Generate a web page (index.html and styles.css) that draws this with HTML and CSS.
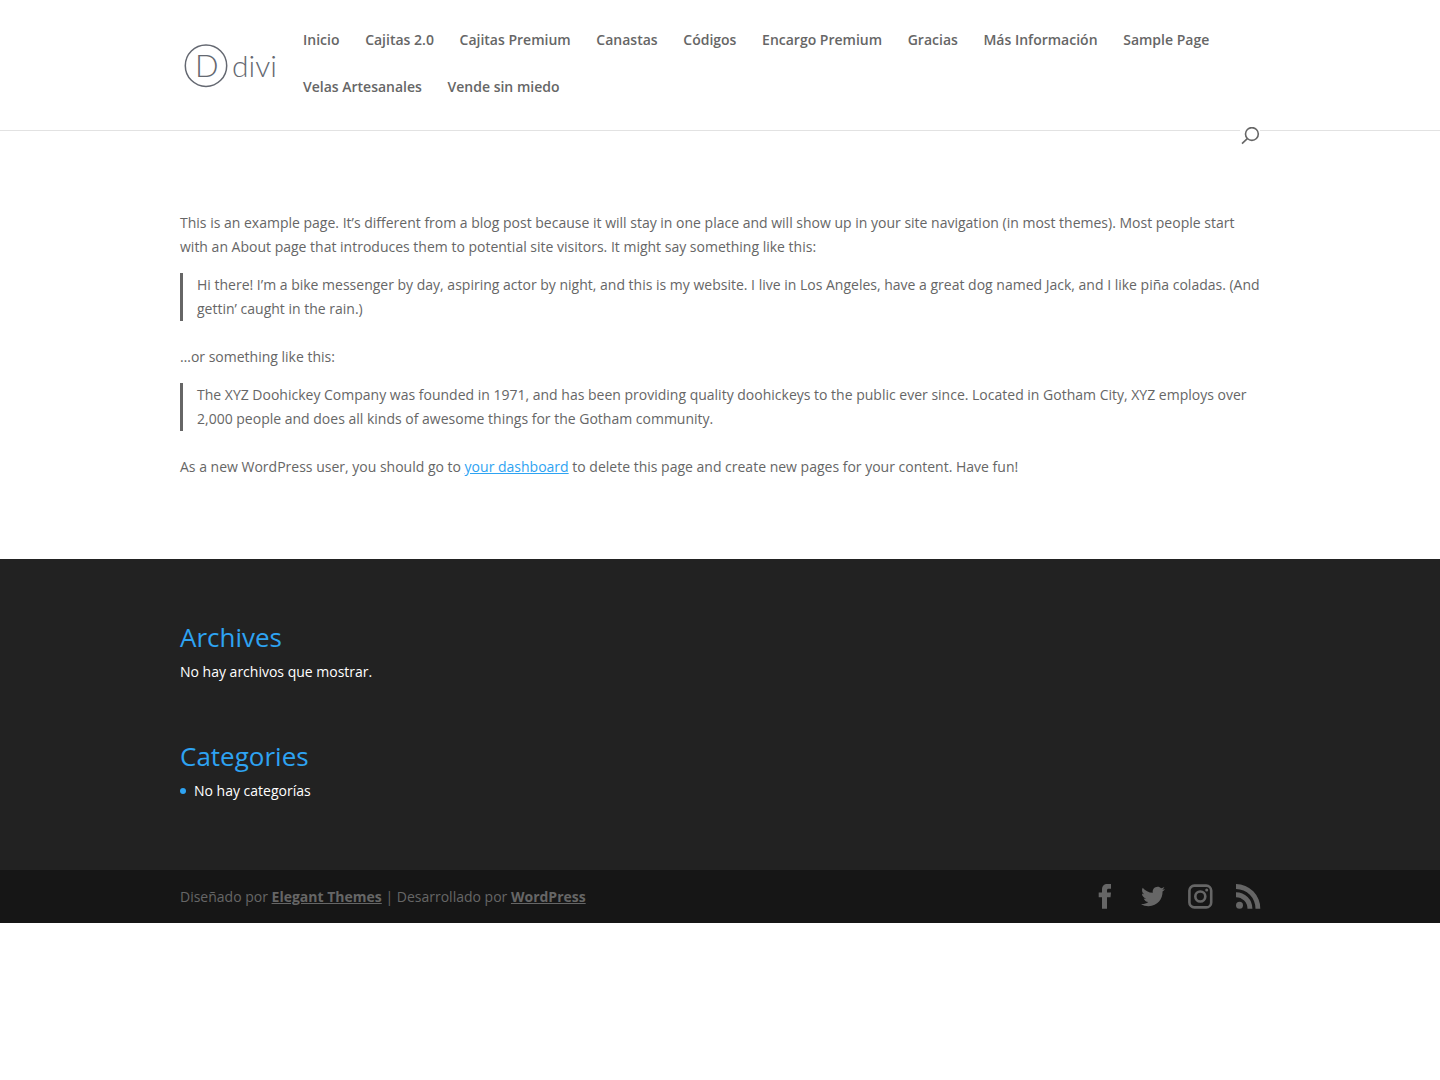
FILE: index.html
```html
<!DOCTYPE html>
<html lang="es">
<head>
    <meta charset="UTF-8">
    <meta name="viewport" content="width=device-width, initial-scale=1">
    <title>Sample Page</title>
    <link rel="stylesheet" href="styles.css">
</head>
<body>

<header class="main-header">
    <div class="container header-inner">
        <a class="logo" href="#" aria-label="divi">
            <svg width="100" height="48" viewBox="0 0 100 48">
                <circle cx="26" cy="24.700" r="20.700"/>
                <text class="logo-d" x="15" y="36">D</text>
                <text class="logo-name" x="52" y="36">divi</text>
            </svg>
        </a>
        <nav class="top-menu">
            <ul>
                <li><a href="#">Inicio</a></li>
                <li><a href="#">Cajitas 2.0</a></li>
                <li><a href="#">Cajitas Premium</a></li>
                <li><a href="#">Canastas</a></li>
                <li><a href="#">Códigos</a></li>
                <li><a href="#">Encargo Premium</a></li>
                <li><a href="#">Gracias</a></li>
                <li><a href="#">Más Información</a></li>
                <li><a href="#">Sample Page</a></li>
                <li><a href="#">Velas Artesanales</a></li>
                <li><a href="#">Vende sin miedo</a></li>
            </ul>
        </nav>
        <button class="search-button" type="button" aria-label="Buscar">
            <svg width="20" height="18" viewBox="0 0 20 18">
                <circle cx="11.900" cy="7" r="6.400"/>
                <path d="M7.300 11.600L2 16.600"/>
            </svg>
        </button>
    </div>
</header>

<main class="container content">
    <p>This is an example page. It’s different from a blog post because it will stay in one place and will show up in your site navigation (in most themes). Most people start with an About page that introduces them to potential site visitors. It might say something like this:</p>
    <blockquote>Hi there! I’m a bike messenger by day, aspiring actor by night, and this is my website. I live in Los Angeles, have a great dog named Jack, and I like piña coladas. (And gettin’ caught in the rain.)</blockquote>
    <p>…or something like this:</p>
    <blockquote>The XYZ Doohickey Company was founded in 1971, and has been providing quality doohickeys to the public ever since. Located in Gotham City, XYZ employs over 2,000 people and does all kinds of awesome things for the Gotham community.</blockquote>
    <p>As a new WordPress user, you should go to <a href="#">your dashboard</a> to delete this page and create new pages for your content. Have fun!</p>
</main>

<footer class="main-footer">
    <div class="container footer-widgets">
        <section class="widget">
            <h4>Archives</h4>
            <p>No hay archivos que mostrar.</p>
        </section>
        <section class="widget">
            <h4>Categories</h4>
            <ul>
                <li>No hay categorías</li>
            </ul>
        </section>
    </div>
    <div class="footer-bottom">
        <div class="container footer-bottom-inner">
            <p class="footer-info">Diseñado por <a href="#">Elegant Themes</a> | Desarrollado por <a href="#">WordPress</a></p>
            <ul class="social-icons">
                <li><a href="#" aria-label="Facebook">
                    <svg width="24" height="25" viewBox="0 0 24 25"><path d="M10 24.700V13.200H6.700V8.400H10V5.700C10 2 12 0 15.500 0H19v4.700h-2.300c-1.300 0-1.700.5-1.700 1.600v2.100h4l-.500 4.800H15v11.500z"/></svg>
                </a></li>
                <li><a href="#" aria-label="Twitter">
                    <svg width="24" height="25" viewBox="-1 0 24 24"><path d="M24 4.557c-.883.392-1.832.656-2.828.775 1.017-.609 1.798-1.574 2.165-2.724-.951.564-2.005.974-3.127 1.195-.897-.957-2.178-1.555-3.594-1.555-3.179 0-5.515 2.966-4.797 6.045-4.091-.205-7.719-2.165-10.148-5.144-1.290 2.213-.669 5.108 1.523 6.574-.806-.026-1.566-.247-2.229-.616-.054 2.281 1.581 4.415 3.949 4.890-.693.188-1.452.232-2.224.084.626 1.956 2.444 3.379 4.600 3.419-2.070 1.623-4.678 2.348-7.290 2.040 2.179 1.397 4.768 2.212 7.548 2.212 9.142 0 14.307-7.721 13.995-14.646.962-.695 1.797-1.562 2.457-2.549z"/></svg>
                </a></li>
                <li><a href="#" aria-label="Instagram">
                    <svg width="24" height="25" viewBox="0 0 24 25">
                        <rect class="line" x="1.400" y="1.600" width="21.800" height="21.800" rx="5"/>
                        <circle class="line" cx="12.300" cy="12.500" r="5"/>
                        <circle cx="18.700" cy="6.100" r="1.500"/>
                    </svg>
                </a></li>
                <li><a href="#" aria-label="RSS">
                    <svg width="24" height="25" viewBox="0 0 24 25">
                        <circle cx="3.500" cy="21.200" r="3.500"/>
                        <path d="M0 8.300v4.900A11.500 11.500 0 0 1 11.500 24.700h4.900A16.400 16.400 0 0 0 0 8.300z"/>
                        <path d="M0 0v4.900A19.600 19.600 0 0 1 19.500 24.700H24.300A24.500 24.500 0 0 0 0 0z"/>
                    </svg>
                </a></li>
            </ul>
        </div>
    </div>
</footer>

</body>
</html>
```

FILE: styles.css
```css
*{
    box-sizing: border-box;
}
body{
    margin: 0;
    background: #fff;
    color: #666;
    font-family: "Open Sans", Arial, sans-serif;
    font-size: 14px;
    font-weight: 400;
    line-height: 24px;
}
p,h4,ul,blockquote{
    margin: 0;
    padding: 0;
}
ul{
    list-style: none;
}
a{
    color: #2ea3f2;
}
.container{
    width: 80%;
    max-width: 1080px;
    margin: 0 auto;
}

/* header */
.main-header{
    border-bottom: 1px solid #e2e2e2;
}
.header-inner{
    position: relative;
    display: flex;
    align-items: center;
}
.logo{
    flex: none;
    width: 123px;
    line-height: 0;
}
.logo circle{
    fill: none;
    stroke: #646871;
    stroke-width: 1.5;
}
.logo text{
    fill: #646871;
    font-family: Lato, sans-serif;
    font-weight: 300;
}
.logo .logo-d{
    font-size: 31px;
}
.logo .logo-name{
    font-size: 30px;
}
.top-menu{
    padding: 16px 0 20px;
}
.top-menu li{
    display: inline-block;
    padding-right: 22px;
    line-height: 47px;
}
.top-menu a{
    color: #666;
    font-weight: 600;
    text-decoration: none;
}
.search-button{
    position: absolute;
    right: 0;
    bottom: -15px;
    padding: 0;
    border: 0;
    background: #fff;
    line-height: 0;
    cursor: pointer;
}
.search-button svg{
    fill: none;
    stroke: #666;
    stroke-width: 1.6;
}

/* page content */
.content{
    padding: 80px 0;
}
.content p{
    padding-bottom: 14px;
}
.content p:last-child{
    padding-bottom: 0;
}
.content blockquote{
    margin-bottom: 24px;
    padding-left: 14px;
    border-left: 3px solid #666;
}

/* footer */
.main-footer{
    background: #222;
}
.footer-widgets{
    display: flex;
    flex-direction: column;
    gap: 59px;
    padding: 65px 0 67px;
    color: #fff;
}
.widget h4{
    padding-bottom: 10px;
    color: #2ea3f2;
    font-size: 26px;
    font-weight: 400;
    line-height: 26px;
}
.widget li{
    display: flex;
    align-items: center;
    gap: 8px;
}
.widget li:before{
    content: "";
    width: 6px;
    height: 6px;
    border-radius: 3px;
    background: #2ea3f2;
}
.footer-bottom{
    background: #161616;
}
.footer-bottom-inner{
    display: flex;
    align-items: center;
    justify-content: space-between;
    min-height: 53px;
}
.footer-info a{
    color: #666;
    font-weight: 700;
}
.social-icons{
    display: flex;
    gap: 24px;
}
.social-icons a{
    display: block;
    line-height: 0;
}
.social-icons svg{
    fill: #666;
    overflow: visible;
}
.social-icons .line{
    fill: none;
    stroke: #666;
    stroke-width: 2.6;
}
```
